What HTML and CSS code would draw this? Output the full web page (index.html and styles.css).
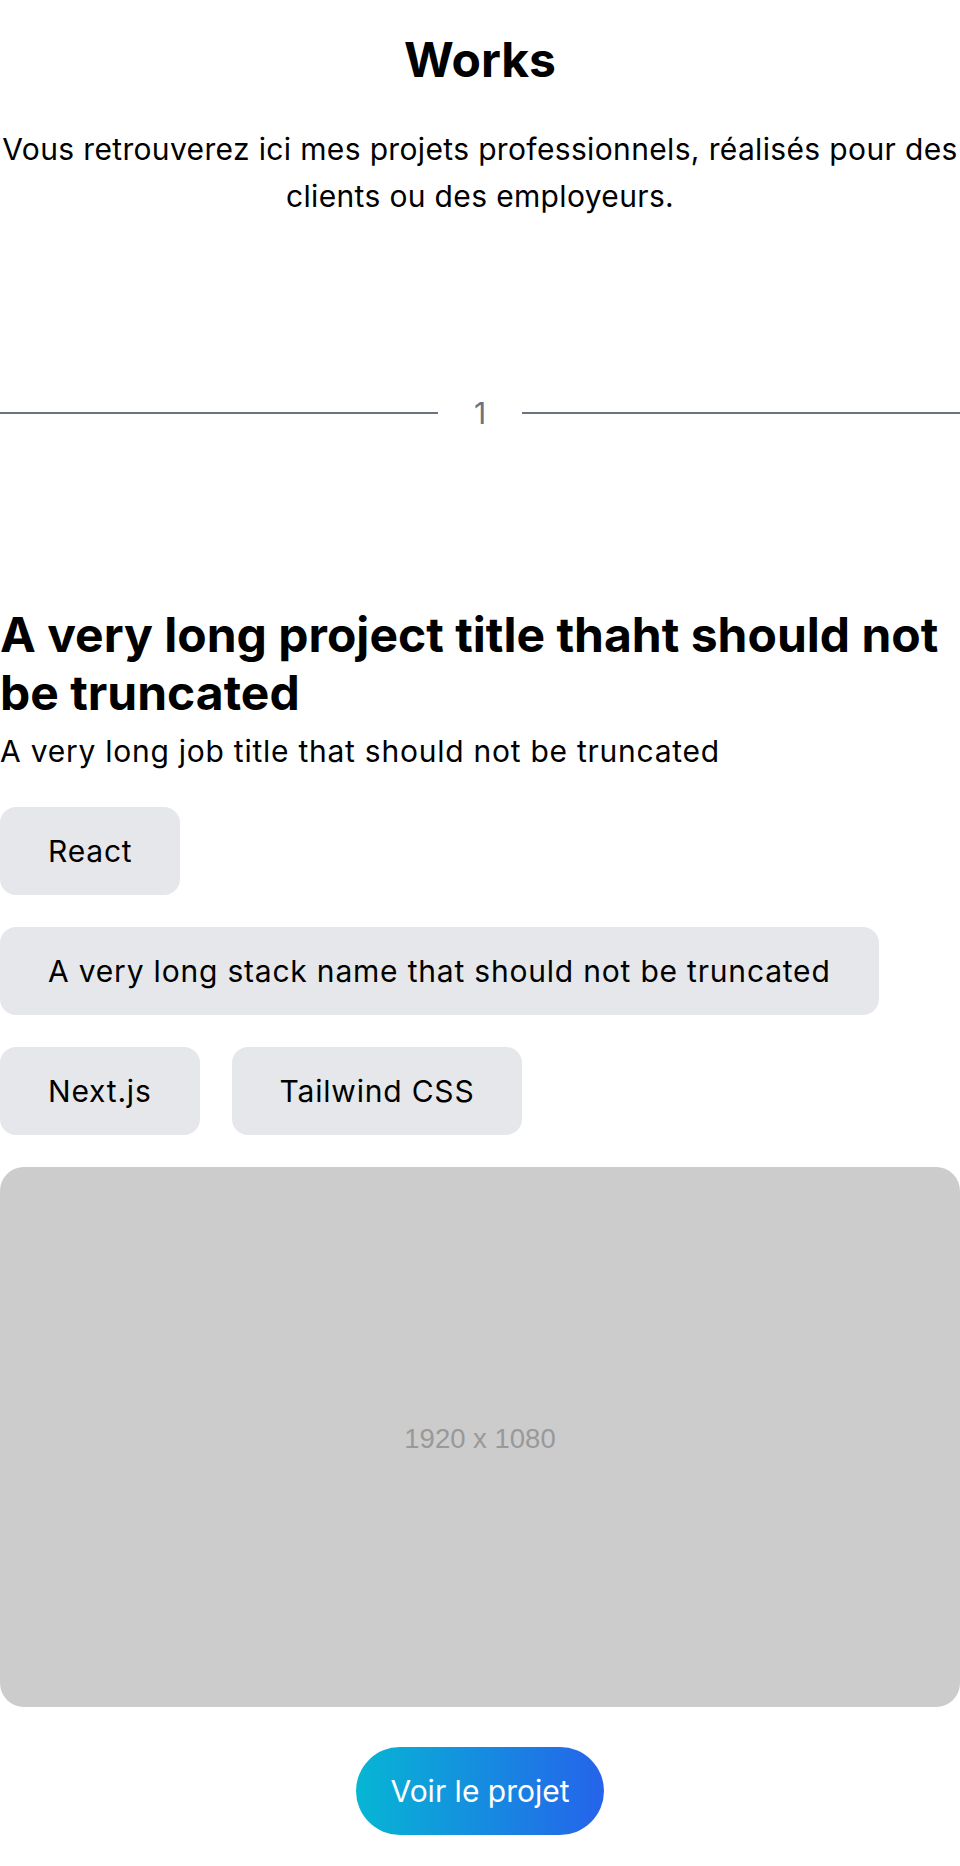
FILE: index.html
```html
<!DOCTYPE html>
<html lang="fr">
<head>
<meta charset="utf-8">
<title>Works</title>
<link rel="stylesheet" href="styles.css">
</head>
<body>
<main class="page">
  <header class="intro">
    <h1 class="intro-title">Works</h1>
    <p class="intro-text">Vous retrouverez ici mes projets professionnels, réalisés pour des clients ou des employeurs.</p>
  </header>

  <div class="divider">
    <span class="divider-line"></span>
    <span class="divider-num">1</span>
    <span class="divider-line"></span>
  </div>

  <article class="project">
    <h2 class="project-title">A very long project title thaht should not be truncated</h2>
    <p class="project-job">A very long job title that should not be truncated</p>
    <ul class="tags">
      <li class="tag">React</li>
      <li class="tag">A very long stack name that should not be truncated</li>
      <li class="tag">Next.js</li>
      <li class="tag">Tailwind CSS</li>
    </ul>
    <div class="project-image"><span class="project-image-label">1920 x 1080</span></div>
    <div class="project-actions">
      <a class="btn" href="#">Voir le projet</a>
    </div>
  </article>
</main>
</body>
</html>
```

FILE: styles.css
```css
* { box-sizing: border-box; }

html, body {
  margin: 0;
  padding: 0;
  background: #ffffff;
}

body {
  font-family: Inter, "Noto Sans", "Liberation Sans", sans-serif;
  color: #000000;
}

.page {
  width: 960px;
  margin: 0 auto;
}

.intro {
  padding-top: 36px;
  text-align: center;
}

.intro-title {
  margin: 0;
  font-size: 48px;
  line-height: 48px;
  font-weight: 700;
}

.intro-text {
  margin: 42px 0 0;
  font-size: 30px;
  line-height: 46.5px;
  font-weight: 400;
  letter-spacing: 0.35px;
}

.divider {
  display: flex;
  align-items: center;
  margin-top: 176px;
}

.divider-line {
  flex: 1;
  height: 2px;
  background: #6b7280;
}

.divider-num {
  width: 84px;
  text-align: center;
  font-size: 30px;
  line-height: 36px;
  color: #6b7280;
}

.project {
  margin-top: 175px;
}

.project-title {
  margin: 0;
  font-size: 48px;
  line-height: 57.6px;
  font-weight: 700;
}

.project-job {
  margin: 11.5px 0 0;
  font-size: 30px;
  line-height: 36px;
  letter-spacing: 0.75px;
}

.tags {
  list-style: none;
  margin: 38px 0 0;
  padding: 0;
  display: flex;
  flex-wrap: wrap;
  gap: 32px;
}

.tag {
  background: #e5e7eb;
  border-radius: 16px;
  padding: 26px 48px;
  font-size: 30px;
  line-height: 36px;
  letter-spacing: 0.8px;
}

.project-image {
  margin-top: 32px;
  width: 960px;
  height: 540px;
  background: #cccccc;
  border-radius: 24px;
  display: flex;
  align-items: center;
  justify-content: center;
  padding-top: 5px;
}

.project-image-label {
  font-family: "Liberation Sans", Arial, sans-serif;
  font-size: 27.5px;
  color: #999999;
}

.project-actions {
  display: flex;
  justify-content: center;
  margin-top: 40px;
  padding-bottom: 32px;
}

.btn {
  display: inline-block;
  padding: 26px 34px;
  font-size: 30px;
  line-height: 36px;
  color: #ffffff;
  text-decoration: none;
  border-radius: 9999px;
  background: linear-gradient(to right, #06b6d4, #2563eb);
}
```
